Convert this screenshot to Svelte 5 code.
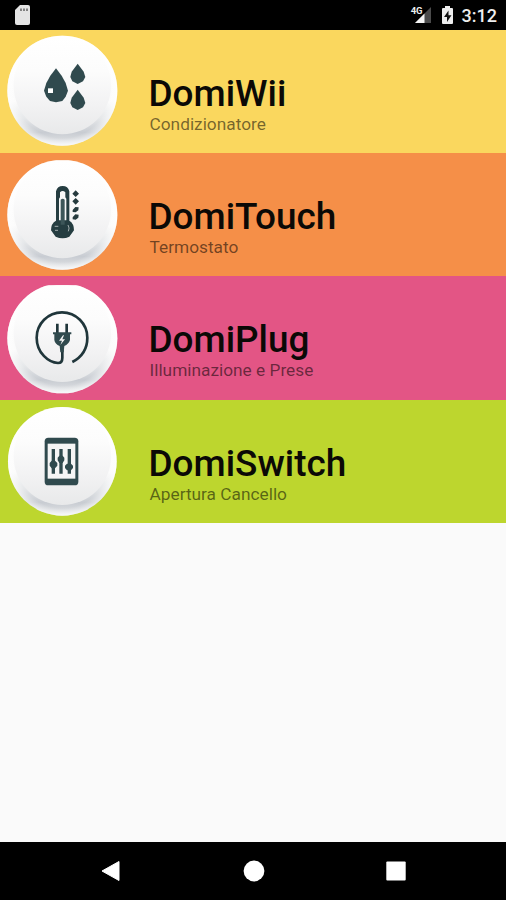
<script>
  const devices = [
    { id: "wii", name: "DomiWii", label: "Condizionatore", cy: 188, r: 165, top: 6, cut: 0 },
    { id: "touch", name: "DomiTouch", label: "Termostato", cy: 188, r: 165, top: 3, cut: 25 },
    { id: "plug", name: "DomiPlug", label: "Illuminazione e Prese", cy: 190, r: 165, top: 3, cut: 31 },
    { id: "switch", name: "DomiSwitch", label: "Apertura Cancello", cy: 190, r: 163, top: 6, cut: 0 },
  ];
</script>

<div class="screen">
  <header class="status">
    <svg class="status__sd" width="18" height="22" viewBox="0 0 18 22">
      <path d="M6 0h8q2 0 2 2v16q0 2-2 2H3q-2 0-2-2V5z" fill="#e4e4e4" />
      <path d="M7 3.500v2.500M10 3.500v2.500M13 3.500v2.500" stroke="#777" stroke-width="1.800" />
    </svg>
    <div class="status__right">
      <span class="status__network">4G</span>
      <svg class="status__signal" width="18" height="18" viewBox="0 0 18 18">
        <path d="M17 1v16H1z" fill="#4b4b4b" />
        <path d="M10.500 7.500V17H1z" fill="#f4f4f4" />
      </svg>
      <svg class="status__battery" width="13" height="19" viewBox="0 0 13 19">
        <path d="M4 0h5v2h2q1 0 1 1v14q0 1-1 1H2q-1 0-1-1V3q0-1 1-1h2z" fill="#eee" />
        <path d="M7.500 4.500 3 11h3v5l4.500-6.800h-3z" fill="#111" />
      </svg>
      <span class="status__clock">3:12</span>
    </div>
  </header>

  <main class="list">
    {#each devices as device (device.id)}
      <div class="row row--{device.id}">
        <svg class="row__button" width="126" height="123.200" viewBox="0 {device.top} 378 369.600">
          <defs>
            <linearGradient id="rim-{device.id}" x1="0" y1="0" x2="0" y2="1">
              <stop offset="0" stop-color="#fff" />
              <stop offset=".6" stop-color="#fbfbfb" />
              <stop offset=".75" stop-color="#e6e8ea" />
              <stop offset=".88" stop-color="#c8ccd2" />
              <stop offset=".93" stop-color="#d4d7db" />
              <stop offset="1" stop-color="#eef0f1" />
            </linearGradient>
            <radialGradient id="edge-{device.id}">
              <stop offset=".86" stop-color="#fff" stop-opacity="0" />
              <stop offset="1" stop-color="#fff" stop-opacity=".6" />
            </radialGradient>
            <linearGradient id="face-{device.id}" x1="0" y1="0" x2="0" y2="1">
              <stop offset="0" stop-color="#fff" />
              <stop offset=".35" stop-color="#fcfcfc" />
              <stop offset=".7" stop-color="#f2f2f3" />
              <stop offset="1" stop-color="#e8e9ea" />
            </linearGradient>
            <clipPath id="cut-{device.id}">
              <rect x="0" y={device.cut} width="378" height="380" />
            </clipPath>
          </defs>
          <g clip-path="url(#cut-{device.id})">
            <circle cx="187" cy={device.cy} r={device.r} fill="url(#rim-{device.id})" />
            <circle cx="187" cy={device.cy} r={device.r} fill="url(#edge-{device.id})" />
            <circle cx="187" cy={device.cy - 15} r="146" fill="url(#face-{device.id})" />
          </g>

          {#if device.id === "wii"}
            <g fill="#304a4e">
              <path d="M168 121L151 143L139 165L132 188L139 206L150 219L168 223L187 219L197 206L204 188L197 165L185 143z" />
              <path d="M233 107L215 131L211 147L217 160L233 168L249 160L256 147L251 131z" />
              <path d="M233 185L215 209L211 225L217 238L233 246L249 238L256 225L251 209z" />
            </g>
            <rect x="144" y="181" width="15" height="14" fill="#fff" />
          {:else if device.id === "touch"}
            <path
              d="M168 206V118Q172 102 188 102T208 118V206Q222 214 222 235L208 254Q188 264 167 254L153 235Q153 214 168 206z"
              fill="#253d41"
            />
            <path d="M177 205V140L180 136V121Q188 113 196 121V136L199 140V205z" fill="#f7f7f7" />
            <path d="M182 218V143Q188 137 194 143V218z" fill="#3d5659" />
            <path d="M164 223h11M165 235h9M204 219q6 9 1 19" fill="none" stroke="#a3aeaf" stroke-width="3" />
            <g fill="#263b3e">
              <path d="M227 115l10 10-10 10-10-10zM227 138l10 10-10 10-10-10z" />
              <path d="M218 174l8-9 10 1-1 9-8 6-9-1zM218 196l8-9 10 1-1 9-8 6-9-1z" />
            </g>
          {:else if device.id === "plug"}
            <g fill="none" stroke="#20363b">
              <path d="M217 261Q262 237 262 188A76 76 0 1 0 110 188C110 234 146 263 174 264Q187 264 187 248V224" stroke-width="8" />
              <path d="M172 146V176M200 146V176" stroke-width="8" />
            </g>
            <path d="M159 172H214V178H210V195Q206 207 193 213L191 232H181L179 213Q165 207 163 195V178H159z" fill="#304a4e" />
            <path d="M189 181L177 197H186L181 210L195 193H187L192 181z" fill="#f5f5f5" />
          {:else}
            <rect x="134" y="119" width="101" height="143" rx="11" fill="#304a4e" />
            <rect x="143" y="137" width="83" height="105" fill="#f5f5f5" />
            <g stroke="#304a4e" stroke-width="10">
              <path d="M160 153V227M183 153V227M208 153V227" />
            </g>
            <g fill="#304a4e">
              <path d="M155 188h10l7 7v8l-7 8h-10l-6-8v-8zM178 173h10l5 6v8l-5 8h-10l-5-8v-8zM201 197h12l6 6v7l-6 7h-12l-6-7v-7z" />
            </g>
          {/if}
        </svg>
        <div class="row__text">
          <div class="row__name">{device.name}</div>
          <div class="row__label">{device.label}</div>
        </div>
      </div>
    {/each}
  </main>

  <nav class="nav">
    <svg width="22" height="24" viewBox="0 0 22 24">
      <path d="M19 2.500v19L2 12z" fill="#fff" stroke="#fff" stroke-linejoin="round" />
    </svg>
    <svg width="22" height="24" viewBox="0 0 22 24">
      <circle cx="11" cy="12" r="10.400" fill="#fff" />
    </svg>
    <svg width="22" height="24" viewBox="0 0 22 24">
      <rect x="1.300" y="2.500" width="19.400" height="19" rx="1" fill="#fff" />
    </svg>
  </nav>
</div>

<style>
  :global(body) { background: #fafafa; }
  .screen {
    display: flex; flex-direction: column;
    width: 506px; height: 900px; overflow: hidden;
    background: #fafafa; font-family: Roboto, sans-serif;
  }
  .status {
    display: flex; justify-content: space-between; align-items: flex-start;
    height: 30px; flex-shrink: 0; box-sizing: border-box;
    padding: 5px 9px 0 14px; background: #000; color: #eee;
  }
  .status__right { display: flex; align-items: flex-start; }
  .status__network { font-size: 9.500px; line-height: 12px; font-weight: 700; margin-right: -9px; z-index: 1; }
  .status__signal { margin: 1px 9px 0 0; }
  .status__battery { margin: 1px 8px 0 0; }
  .status__clock { font-size: 18px; line-height: 22px; font-weight: 500; }

  .list { display: flex; flex-direction: column; flex: 1; }
  .row { display: flex; height: 123.200px; flex-shrink: 0; }
  .row--wii { background: #fad75e; }
  .row--touch { background: #f58f48; }
  .row--plug { background: #e35585; }
  .row--switch { background: #bdd62e; }
  .row__button { display: block; flex-shrink: 0; }
  .row__text { padding: 42px 0 0 22.500px; white-space: nowrap; }
  .row__name { font-size: 36.900px; line-height: 43px; font-weight: 500; color: #0b0906; }
  .row__label { padding-left: 1px; margin-top: -1px; font-size: 17.300px; line-height: 20px; color: rgba(0, 0, 0, 0.54); }

  .nav {
    display: flex; justify-content: space-between; align-items: center;
    height: 58px; flex-shrink: 0; box-sizing: border-box;
    padding: 0 99px 0 100px; background: #000;
  }
</style>
